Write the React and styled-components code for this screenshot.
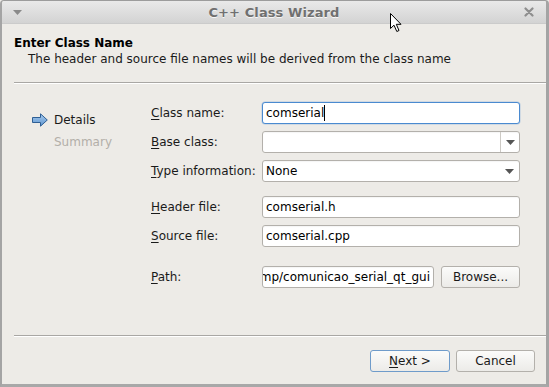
import React from "react";
import styled, { createGlobalStyle } from "styled-components";

const Global = createGlobalStyle`
  html, body { margin: 0; padding: 0; background: #edebe7; }
  body { font-family: "DejaVu Sans", "Liberation Sans", sans-serif; font-size: 12px; color: #1a1a1a; }
  * { box-sizing: border-box; }
`;

const Window = styled.div`
  position: relative;
  width: 549px;
  height: 387px;
  display: flex;
  flex-direction: column;
  background: #edebe7;
  border-left: 2px solid #a4a4a4;
  border-right: 3px solid #a4a4a4;
  border-bottom: 3px solid #a8a8a8;
  border-top: 1px solid #9c9c9c;
  border-radius: 4px 4px 0 0;
  overflow: hidden;
`;

const TitleBar = styled.div`
  height: 23px;
  flex: none;
  display: flex;
  align-items: center;
  justify-content: space-between;
  padding: 0 12px 0 11px;
  background: linear-gradient(#e9e9e9, #d3d3d3);
  border-bottom: 1px solid #cbcbcb;
`;

const Title = styled.div`
  font-weight: bold;
  font-size: 13px;
  color: #707070;
  text-shadow: 0 1px 0 #f6f6f6;
  letter-spacing: 0.1px;
  padding-left: 2px;
`;

const Header = styled.div`
  padding: 12px 0 0 12px;
  display: flex;
  flex-direction: column;
  gap: 2px;
`;

const HeaderTitle = styled.div`
  font-weight: bold;
  font-size: 12px;
  color: #000;
`;

const HeaderSub = styled.div`
  padding-left: 14px;
  color: #1a1a1a;
`;

const Separator = styled.div`
  height: 2px;
  margin: ${p => p.$top}px 0 0 12px;
  border-top: 1px solid #a9a7a4;
  border-bottom: 1px solid #ffffff;
`;

const Main = styled.div`
  display: flex;
  flex: 1;
  padding: 18px 26px 0 30px;
`;

const Nav = styled.div`
  width: 119px;
  flex: none;
  display: flex;
  flex-direction: column;
  gap: 6px;
  padding-top: 10px;
`;

const NavItem = styled.div`
  display: flex;
  align-items: center;
  gap: 6px;
  padding-left: ${p => (p.$active ? 0 : 22)}px;
  color: ${p => (p.$active ? "#1a1a1a" : "#b3afa9")};
  height: 16px;
`;

const Form = styled.div`
  flex: 1;
  min-width: 0;
  align-self: flex-start;
  display: grid;
  grid-template-columns: 111px minmax(0, 1fr);
  row-gap: 7px;
  align-items: center;
`;

const Label = styled.div`
  white-space: nowrap;
  margin-top: ${p => p.$gap || 0}px;
  & u { text-decoration: underline; text-underline-offset: 2px; }
`;

const FieldBox = styled.div`
  height: 22px;
  margin-top: ${p => p.$gap || 0}px;
  display: flex;
  align-items: center;
  background: #fff;
  border: 1px solid ${p => (p.$focused ? "#4a8ad0" : "#b3b0ab")};
  box-shadow: ${p => (p.$focused ? "0 0 0 0.5px rgba(74,138,208,0.35)" : "inset 0 1px 1px rgba(0,0,0,0.04)")};
  border-radius: 3px;
  padding-left: 3px;
  overflow: hidden;
  white-space: nowrap;
  color: #000;
`;

const Caret = styled.span`
  display: inline-block;
  width: 1px;
  height: 16px;
  background: #000;
  vertical-align: middle;
`;

const ComboText = styled.div`
  flex: 1;
`;

const ComboBtn = styled.div`
  width: 19px;
  align-self: stretch;
  display: flex;
  align-items: center;
  justify-content: center;
  border-left: ${p => (p.$editable ? "1px solid #cdcac5" : "none")};
`;

const PathRow = styled.div`
  margin-top: 12px;
  display: flex;
  gap: 7px;
  min-width: 0;
`;

const PathInput = styled(FieldBox)`
  margin-top: 0;
  flex: 1;
  min-width: 0;
  direction: rtl;
  justify-content: flex-start;
  padding: 0 3px 0 0;
  span { direction: ltr; unicode-bidi: bidi-override; flex: none; }
`;

const Button = styled.button`
  height: 22px;
  width: ${p => p.$w}px;
  flex: none;
  font-family: inherit;
  font-size: 12px;
  color: #1a1a1a;
  background: linear-gradient(#fbfbfa, #ecebe8);
  border: 1px solid ${p => (p.$default ? "#6f9bca" : "#b3b0ab")};
  border-radius: 3px;
  padding: 0;
  & u { text-decoration: underline; text-underline-offset: 2px; }
`;

const Footer = styled.div`
  display: flex;
  justify-content: flex-end;
  gap: 6px;
  padding: 13px 11px 12px 0;
`;

const Spacer = styled.div`
  flex: 1;
`;

const Pointer = styled.svg`
  position: absolute;
  left: 388px;
  top: 12px;
`;

const Arrow = () => (
  <svg width="16" height="14" viewBox="0 0 16 14">
    <defs>
      <linearGradient id="ag" x1="0" y1="0" x2="0" y2="1">
        <stop offset="0" stopColor="#a9cbee" />
        <stop offset="1" stopColor="#5d95d0" />
      </linearGradient>
    </defs>
    <path d="M0.5 4.5 H8.5 V0.8 L15.3 7 L8.5 13.2 V9.5 H0.5 Z" fill="url(#ag)" stroke="#2f5f94" strokeWidth="1" strokeLinejoin="round" />
  </svg>
);

const DownTri = ({ color = "#555" }) => (
  <svg width="9" height="5" viewBox="0 0 9 5">
    <path d="M0 0 H9 L4.5 5 Z" fill={color} />
  </svg>
);

const CloseX = () => (
  <svg width="10" height="10" viewBox="0 0 10 10">
    <path d="M1.5 1.5 L8.5 8.5 M8.5 1.5 L1.5 8.5" stroke="#8e8e8e" strokeWidth="2.2" strokeLinecap="round" />
  </svg>
);

export default function App() {
  return (
    <>
      <Global />
      <Window>
        <TitleBar>
          <DownTri color="#8a8a8a" />
          <Title>C++ Class Wizard</Title>
          <CloseX />
        </TitleBar>
        <Header>
          <HeaderTitle>Enter Class Name</HeaderTitle>
          <HeaderSub>The header and source file names will be derived from the class name</HeaderSub>
        </Header>
        <Separator $top={16} />
        <Main>
          <Nav>
            <NavItem $active>
              <Arrow />
              Details
            </NavItem>
            <NavItem>Summary</NavItem>
          </Nav>
          <Form>
            <Label><u>C</u>lass name:</Label>
            <FieldBox $focused>comserial<Caret /></FieldBox>

            <Label><u>B</u>ase class:</Label>
            <FieldBox>
              <ComboText />
              <ComboBtn $editable><DownTri /></ComboBtn>
            </FieldBox>

            <Label><u>T</u>ype information:</Label>
            <FieldBox>
              <ComboText>None</ComboText>
              <ComboBtn><DownTri /></ComboBtn>
            </FieldBox>

            <Label $gap={7}><u>H</u>eader file:</Label>
            <FieldBox $gap={7}>comserial.h</FieldBox>

            <Label><u>S</u>ource file:</Label>
            <FieldBox>comserial.cpp</FieldBox>

            <Label $gap={12}><u>P</u>ath:</Label>
            <PathRow>
              <PathInput><span>/home/user/tmp/comunicao_serial_qt_gui</span></PathInput>
              <Button $w={79}>Browse...</Button>
            </PathRow>
          </Form>
        </Main>
        <Spacer />
        <Separator $top={0} />
        <Footer>
          <Button $w={80} $default><u>N</u>ext &gt;</Button>
          <Button $w={79}>Cancel</Button>
        </Footer>
        <Pointer width="12" height="20" viewBox="0 0 12 20">
          <path d="M0.5 0.5 V15.5 L4 12.2 L6.8 18.5 L9 17.5 L6.3 11.3 H11 Z" fill="#fff" stroke="#000" strokeWidth="1" strokeLinejoin="round" />
        </Pointer>
      </Window>
    </>
  );
}
